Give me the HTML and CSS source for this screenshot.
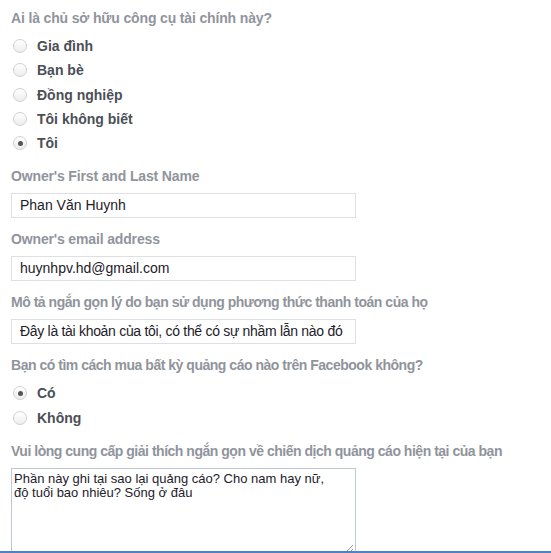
FILE: index.html
```html
<!DOCTYPE html>
<html lang="vi">
<head>
<meta charset="utf-8">
<title>Form</title>
<link rel="stylesheet" href="styles.css">
</head>
<body>
<form class="form">
  <div class="group">
    <div class="q q-radio">Ai là chủ sở hữu công cụ tài chính này?</div>
    <ul class="radios">
      <li class="opt"><span class="radio"></span><span class="opt-label">Gia đình</span></li>
      <li class="opt"><span class="radio"></span><span class="opt-label">Bạn bè</span></li>
      <li class="opt"><span class="radio"></span><span class="opt-label">Đồng nghiệp</span></li>
      <li class="opt"><span class="radio"></span><span class="opt-label">Tôi không biết</span></li>
      <li class="opt"><span class="radio checked"></span><span class="opt-label">Tôi</span></li>
    </ul>
  </div>
  <div class="group">
    <div class="q">Owner's First and Last Name</div>
    <div class="input">Phan Văn Huynh</div>
  </div>
  <div class="group">
    <div class="q">Owner's email address</div>
    <div class="input">huynhpv.hd@gmail.com</div>
  </div>
  <div class="group">
    <div class="q q-long">Mô tả ngắn gọn lý do bạn sử dụng phương thức thanh toán của họ</div>
    <div class="input input-tight">Đây là tài khoản của tôi, có thể có sự nhầm lẫn nào đó</div>
  </div>
  <div class="group">
    <div class="q q-radio q-long">Bạn có tìm cách mua bất kỳ quảng cáo nào trên Facebook không?</div>
    <ul class="radios">
      <li class="opt"><span class="radio checked"></span><span class="opt-label">Có</span></li>
      <li class="opt"><span class="radio"></span><span class="opt-label">Không</span></li>
    </ul>
  </div>
  <div class="group">
    <div class="q q-long">Vui lòng cung cấp giải thích ngắn gọn về chiến dịch quảng cáo hiện tại của bạn</div>
    <div class="textarea">Phần này ghi tại sao lại quảng cáo? Cho nam hay nữ,<br>độ tuổi bao nhiêu? Sống ở đâu<span class="grip"></span></div>
  </div>
</form>
<div class="frame-line"></div>
</body>
</html>
```

FILE: styles.css
```css
* { box-sizing: border-box; }
html, body {
  margin: 0;
  padding: 0;
  background: #fff;
  overflow: hidden;
}
body {
  font-family: "Liberation Sans", Arial, sans-serif;
  height: 553px;
}
.form {
  padding: 9px 0 0 11px;
  display: flex;
  flex-direction: column;
  gap: 12px;
}
.group {
  display: flex;
  flex-direction: column;
}
.q {
  font-size: 14px;
  font-weight: bold;
  color: #90949c;
  line-height: 18px;
  margin-bottom: 8px;
  white-space: nowrap;
  letter-spacing: -0.15px;
}
.q-long { letter-spacing: -0.48px; }
.q-radio { margin-bottom: 7px; }
.radios {
  list-style: none;
  margin: 0;
  padding: 0;
}
.opt {
  height: 24.25px;
  display: flex;
  align-items: center;
}
.radio {
  width: 14px;
  height: 14px;
  border-radius: 50%;
  margin-left: 2px;
  margin-right: 10px;
  border: 1px solid #d2d2d2;
  background: linear-gradient(#ffffff, #ededed);
  box-shadow: 0 0 1px rgba(0,0,0,0.06);
  display: flex;
  align-items: center;
  justify-content: center;
  flex: none;
}
.radio.checked::after {
  content: "";
  width: 5px;
  height: 5px;
  border-radius: 50%;
  background: #555;
}
.opt-label {
  font-size: 14px;
  font-weight: bold;
  color: #4b4f56;
}
.input {
  width: 345px;
  height: 25px;
  border: 1px solid #dddfe2;
  padding: 0 8px;
  font-size: 14px;
  line-height: 23px;
  color: #1d2129;
  white-space: nowrap;
  overflow: hidden;
}
.input-tight { letter-spacing: -0.3px; padding-right: 2px; }
.textarea {
  position: relative;
  width: 345px;
  height: 100px;
  border: 1px solid #bdc7d8;
  padding: 3px 2px;
  font-size: 13px;
  line-height: 14px;
  color: #1d2129;
}
.grip {
  position: absolute;
  right: 2px;
  top: 76px;
  width: 8px;
  height: 8px;
  background: linear-gradient(135deg, transparent 45%, #999 45%, #999 55%, transparent 55%, transparent 70%, #999 70%, #999 80%, transparent 80%);
}
.frame-line {
  position: fixed;
  left: 0;
  right: 0;
  bottom: 0;
  height: 2px;
  background: #4f81c7;
}
```
